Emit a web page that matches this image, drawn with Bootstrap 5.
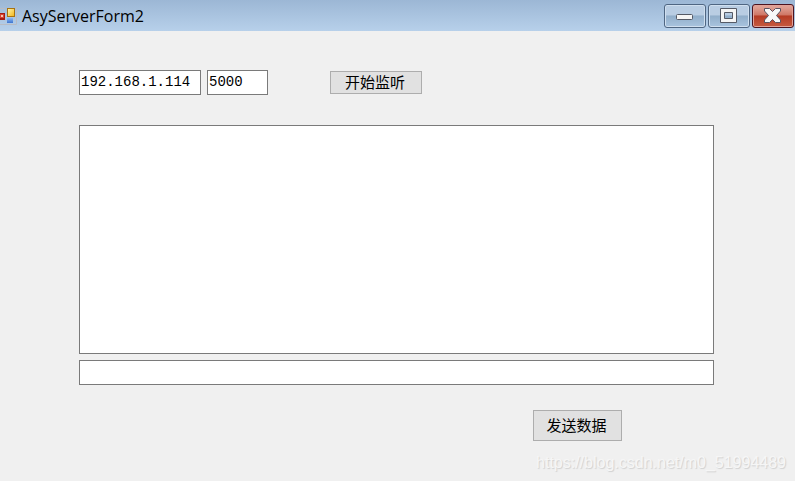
<!DOCTYPE html>
<html lang="zh-CN">
<head>
<meta charset="utf-8">
<meta name="viewport" content="width=device-width, initial-scale=1">
<title>AsyServerForm2</title>
<link rel="stylesheet" href="https://cdn.jsdelivr.net/npm/bootstrap@5.3.0/dist/css/bootstrap.min.css">
<style>
body { background: #f0f0f0; color: #000; font-family: "Open Sans", "Noto Sans CJK SC", sans-serif; }
.titlebar { height: 31px; background: linear-gradient(#9cb7d5, #b7d0ea); }
.app-title { font-size: 16px; line-height: 24px; font-weight: 400; }
.app-icon { width: 18px; height: 20px; }
.caption-group { gap: 2px; padding: 4px 1px 0 0; }
.caption-btn { width: 42px; height: 24px; padding: 0; border: 1px solid #4f6682; border-radius: 3px; box-shadow: inset 0 0 0 1px #d0dfef; background: linear-gradient(#b9cde3 0 45%, #91aeca 50%, #a9c4df); }
.caption-close { border-color: #4c1420; box-shadow: inset 0 0 0 1px #e2a298; background: linear-gradient(#e0a094 0 10%, #cf7766 45%, #b53b24 50%, #c65a40); }
.form-area { padding: 39px 81px 0 79px; }
.field { height: 25px; padding: 0 1px 2px; border: 1px solid #7a7a7a; border-radius: 0; background: #fff; color: #000; font: 14px/20px "Liberation Mono", "Noto Sans CJK SC", monospace; }
.field-ip { width: 122px; }
.field-port { width: 61px; margin-left: 6px; }
.field-log { height: 229px; margin-top: 30px; resize: none; }
.field-message { margin-top: 6px; }
.win-btn { padding: 0 2px 2px 0; border: 1px solid #adadad; border-radius: 0; background: #e1e1e1; color: #000; font: 15px/20px "Noto Sans CJK SC", sans-serif; }
.btn-listen { width: 92px; height: 23px; margin-left: 62px; }
.btn-send { width: 89px; height: 31px; margin: 25px 92px 0 0; }
.watermark { margin: 11px 9px 0 0; font: 16px/22px "Liberation Sans", sans-serif; color: #f6f6f6; text-shadow: 1px 1px 1px #d0d0d0; }
</style>
</head>
<body>
<header class="titlebar d-flex align-items-start justify-content-between">
  <div class="d-flex align-items-center pt-1">
    <svg class="app-icon" viewBox="0 0 18 20" aria-hidden="true">
      <defs>
        <linearGradient id="gold" x2="1" y2="1"><stop stop-color="#fff3a5"/><stop offset="1" stop-color="#f2b71e"/></linearGradient>
        <linearGradient id="blue" x2="0" y2="1"><stop stop-color="#8ab8f4"/><stop offset="1" stop-color="#3e75d0"/></linearGradient>
      </defs>
      <path d="M0 2.500h5.500M0 18.500h16.500V1.500" fill="none" stroke="#b9bcc4"/>
      <rect y="7" width="5" height="7" fill="#a51c12"/><rect y="8" width="4" height="4" fill="#d64432"/><rect x="1" y="9" width="2" height="2" fill="#f6c2b4"/>
      <rect x="7" y="2" width="8" height="9" fill="#a87210"/><rect x="8" y="3" width="6" height="7" fill="url(#gold)"/>
      <rect x="7" y="12" width="6" height="5" fill="url(#blue)"/>
    </svg>
    <h1 class="app-title mb-0 ms-1">AsyServerForm2</h1>
  </div>
  <div class="caption-group d-flex">
    <button type="button" class="caption-btn d-flex" aria-label="Minimize"><svg width="40" height="22" aria-hidden="true"><rect x="11.500" y="9.500" width="16" height="5" rx="1" fill="#f5f5f5" stroke="#555a66"/></svg></button>
    <button type="button" class="caption-btn d-flex" aria-label="Maximize"><svg width="40" height="22" aria-hidden="true"><path fill-rule="evenodd" d="M11.500 3.500h16v14h-16zM15.500 7.500v6h8v-6z" fill="#f5f5f5" stroke="#555a66"/></svg></button>
    <button type="button" class="caption-btn caption-close d-flex" aria-label="Close"><svg width="40" height="22" aria-hidden="true"><path d="M11.500 3.500h5l3 3 3-3h5v2.500l-4 4.500 4 4.500v2.500h-5l-3-3-3 3h-5V15l4-4.500-4-4.500z" fill="#f8f8f8" stroke="#5b5360"/></svg></button>
  </div>
</header>
<main>
  <form class="form-area">
    <div class="d-flex align-items-center">
      <input type="text" class="field field-ip" value="192.168.1.114" aria-label="IP">
      <input type="text" class="field field-port" value="5000" aria-label="Port">
      <button type="button" class="win-btn btn-listen">开始监听</button>
    </div>
    <textarea class="field field-log d-block w-100" aria-label="Log"></textarea>
    <input type="text" class="field field-message d-block w-100" aria-label="Message">
    <div class="d-flex justify-content-end">
      <button type="button" class="win-btn btn-send">发送数据</button>
    </div>
  </form>
  <div class="watermark text-end">https://blog.csdn.net/m0_51994489</div>
</main>
<script src="https://cdn.jsdelivr.net/npm/bootstrap@5.3.0/dist/js/bootstrap.bundle.min.js"></script>
</body>
</html>
